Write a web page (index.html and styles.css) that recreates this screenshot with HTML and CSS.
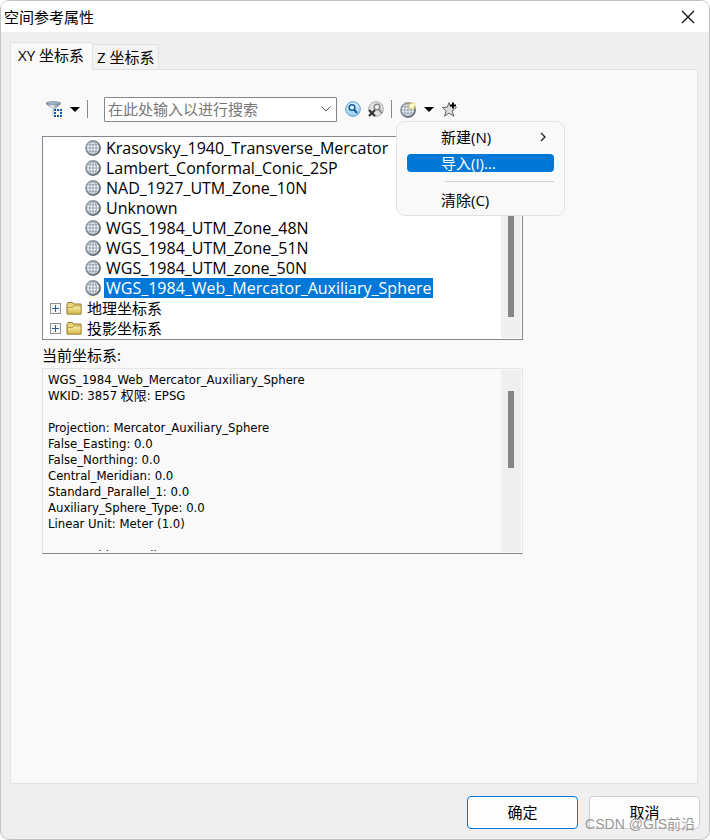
FILE: index.html
```html
<!DOCTYPE html>
<html lang="zh-CN">
<head>
    <meta charset="UTF-8">
    <meta name="viewport" content="width=device-width, initial-scale=1.0">
    <title>空间参考属性</title>
    <link rel="stylesheet" href="styles.css">
</head>
<body>

    <!-- shared icons -->
    <svg class="defs" width="0" height="0" aria-hidden="true">
        <defs>
            <linearGradient id="metal" x1="0" y1="0" x2="1" y2="1">
                <stop offset="0" stop-color="#a3acb5"/>
                <stop offset="1" stop-color="#4f5a66"/>
            </linearGradient>
            <linearGradient id="gold" x1="0" y1="0" x2="0" y2="1">
                <stop offset="0" stop-color="#fbf1ae"/>
                <stop offset="1" stop-color="#d2b548"/>
            </linearGradient>
            <linearGradient id="funnel" x1="0" y1="0" x2="1" y2="0">
                <stop offset="0" stop-color="#6f8397"/>
                <stop offset="0.4" stop-color="#e6ebf0"/>
                <stop offset="1" stop-color="#5a6f85"/>
            </linearGradient>
            <linearGradient id="lens" x1="0" y1="0" x2="0" y2="1">
                <stop offset="0" stop-color="#d9effc"/>
                <stop offset="1" stop-color="#9ccdf0"/>
            </linearGradient>
        </defs>
        <symbol id="globe" viewBox="0 0 16 16">
            <circle cx="8" cy="8" r="7" fill="#f6f8fa" stroke="url(#metal)" stroke-width="1.8"/>
            <path d="M8 1.500v13M1.500 8h13M2.500 4.800h11M2.500 11.200h11M7 1.500C4 4 4 12 7 14.500M9 1.500c3 2.500 3 10.500 0 13" fill="none" stroke="#8492a1" stroke-width="0.8"/>
        </symbol>
        <symbol id="folder" viewBox="0 0 16 13">
            <path d="M1 12V2l1-1.500h4.500l1 1.500H15V12z" fill="#e9d478" stroke="#8f7a2c"/>
            <path d="M1.500 5.500h5l1-1.500H15V12H1.500z" fill="url(#gold)" stroke="#a8913a" stroke-width="0.8"/>
        </symbol>
    </svg>

    <div class="dialog">
        <header class="titlebar">
            <h1>空间参考属性</h1>
            <button type="button" class="close" aria-label="关闭">
                <svg width="14" height="14" viewBox="0 0 14 14"><path d="M1 1l12 12M13 1L1 13" stroke="#111" stroke-width="1.300"/></svg>
            </button>
        </header>

        <div class="tabs" role="tablist">
            <button type="button" class="tab active" role="tab" aria-selected="true">XY 坐标系</button>
            <button type="button" class="tab" role="tab" aria-selected="false">Z 坐标系</button>
        </div>

        <main class="panel">
            <div class="toolbar">
                <button type="button" class="tool filter" aria-label="筛选">
                    <svg width="17" height="17" viewBox="0 0 17 17">
                        <path d="M0 1.500h14.500v1.500L9.500 8v7.500H8L5.500 14V8L0 3z" fill="url(#funnel)"/>
                        <ellipse cx="7.300" cy="2" rx="7" ry="1.500" fill="#9fb3c6" stroke="#71869b" stroke-width="0.600"/>
                        <rect x="8" y="8" width="9" height="9" fill="#f9f9f9"/>
                        <path d="M8 8h2v2H8zM11 8h2v2h-2zM14 8h2v2h-2zM8 11h2v2H8zM14 11h2v2h-2zM8 14h2v2H8zM11 14h2v2h-2zM14 14h2v2h-2z" fill="#0c5aa6"/>
                    </svg>
                    <span class="arrow"></span>
                </button>
                <span class="divider"></span>
                <div class="search">
                    <input type="text" placeholder="在此处输入以进行搜索" aria-label="搜索">
                    <button type="button" aria-label="搜索记录">
                        <svg width="10" height="6" viewBox="0 0 10 6"><path d="M0.500 0.500L5 5l4.500-4.500" fill="none" stroke="#555"/></svg>
                    </button>
                </div>
                <button type="button" class="tool" aria-label="搜索">
                    <svg width="16" height="16" viewBox="0 0 16 16">
                        <circle cx="8" cy="8" r="7.300" fill="url(#lens)" stroke="#5a9fd0"/>
                        <circle cx="7" cy="6.500" r="2.800" fill="#f4fbff" stroke="#0e5c9e" stroke-width="1.500"/>
                        <path d="M9 8.500l3 3.500" stroke="#0e5c9e" stroke-width="2"/>
                    </svg>
                </button>
                <button type="button" class="tool" aria-label="清除搜索">
                    <svg width="16" height="16" viewBox="0 0 16 16">
                        <circle cx="8" cy="8" r="7.300" fill="#e2e2e2" stroke="#aaa"/>
                        <circle cx="9" cy="6" r="2.800" fill="#f5f5f5" stroke="#888" stroke-width="1.500"/>
                        <path d="M11 8.500l3 4" stroke="#888" stroke-width="2"/>
                        <path d="M1 9l6 6M7 9l-6 6" stroke="#333" stroke-width="2"/>
                    </svg>
                </button>
                <span class="divider"></span>
                <div class="globe-menu">
                    <button type="button" class="tool globe" aria-label="添加坐标系" aria-haspopup="menu" aria-expanded="true">
                        <svg width="17" height="17" viewBox="0 0 17 17">
                            <use href="#globe" y="1" width="16" height="16"/>
                            <path d="M12 1v8M8 5h8M9.200 2.200l5.600 5.600M14.800 2.200L9.200 7.800" stroke="#e0c65a" stroke-width="1.200"/>
                            <circle cx="12" cy="5" r="2.400" fill="#fff9c8"/>
                        </svg>
                        <span class="arrow"></span>
                    </button>
                    <div class="menu" role="menu">
                        <button type="button" class="item" role="menuitem">新建(N)
                            <svg width="6" height="10" viewBox="0 0 6 10"><path d="M1 1l4 4-4 4" fill="none" stroke="#222" stroke-width="1.300"/></svg>
                        </button>
                        <button type="button" class="item selected" role="menuitem">导入(I)...</button>
                        <hr>
                        <button type="button" class="item" role="menuitem">清除(C)</button>
                    </div>
                </div>
                <button type="button" class="tool" aria-label="添加到收藏夹">
                    <svg width="16" height="16" viewBox="0 0 16 16">
                        <path d="M7 1.500l1.700 4.700 5.800 0.200-4.500 3.500 2 5.300-5-3-4.500 3 1.500-5.300-3.500-3.500 4.800-0.200z" fill="#dcdcdc" stroke="#666"/>
                        <path d="M11 2v5M8.500 4.500h5" stroke="#fff" stroke-width="4"/>
                        <path d="M11 1.500v6M8 4.500h6" stroke="#000" stroke-width="2"/>
                    </svg>
                </button>
            </div>

            <div class="box tree-box">
                <ul class="tree" role="tree">
                    <li class="leaf" role="treeitem"><svg width="16" height="16"><use href="#globe"/></svg><span>Krasovsky_1940_Transverse_Mercator</span></li>
                    <li class="leaf" role="treeitem"><svg width="16" height="16"><use href="#globe"/></svg><span>Lambert_Conformal_Conic_2SP</span></li>
                    <li class="leaf" role="treeitem"><svg width="16" height="16"><use href="#globe"/></svg><span>NAD_1927_UTM_Zone_10N</span></li>
                    <li class="leaf" role="treeitem"><svg width="16" height="16"><use href="#globe"/></svg><span>Unknown</span></li>
                    <li class="leaf" role="treeitem"><svg width="16" height="16"><use href="#globe"/></svg><span>WGS_1984_UTM_Zone_48N</span></li>
                    <li class="leaf" role="treeitem"><svg width="16" height="16"><use href="#globe"/></svg><span>WGS_1984_UTM_Zone_51N</span></li>
                    <li class="leaf" role="treeitem"><svg width="16" height="16"><use href="#globe"/></svg><span>WGS_1984_UTM_zone_50N</span></li>
                    <li class="leaf current" role="treeitem" aria-selected="true"><svg width="16" height="16"><use href="#globe"/></svg><span>WGS_1984_Web_Mercator_Auxiliary_Sphere</span></li>
                    <li role="treeitem" aria-expanded="false">
                        <button type="button" class="expand" aria-label="展开"></button>
                        <svg width="16" height="13"><use href="#folder"/></svg><span>地理坐标系</span>
                    </li>
                    <li role="treeitem" aria-expanded="false">
                        <button type="button" class="expand" aria-label="展开"></button>
                        <svg width="16" height="13"><use href="#folder"/></svg><span>投影坐标系</span>
                    </li>
                </ul>
                <div class="scrollbar"><div class="thumb"></div></div>
            </div>

            <label class="caption" for="details">当前坐标系:</label>
            <div class="box details-box">
                <textarea id="details" readonly>
WGS_1984_Web_Mercator_Auxiliary_Sphere
WKID: 3857 权限: EPSG

Projection: Mercator_Auxiliary_Sphere
False_Easting: 0.0
False_Northing: 0.0
Central_Meridian: 0.0
Standard_Parallel_1: 0.0
Auxiliary_Sphere_Type: 0.0
Linear Unit: Meter (1.0)

Geographic Coordinate System:</textarea>
                <div class="scrollbar"><div class="thumb"></div></div>
            </div>
        </main>

        <footer class="actions">
            <button type="button" class="action primary">确定</button>
            <button type="button" class="action">取消</button>
            <span class="watermark">CSDN @GIS前沿</span>
        </footer>
    </div>

</body>
</html>
```

FILE: styles.css
```css
* {
    box-sizing: border-box;
}

body {
    margin: 0;
    background: #fff;
    color: #000;
    font-family: "Open Sans", "Noto Sans CJK SC", sans-serif;
    font-size: 15px;
    line-height: 20px;
}

button, input, textarea {
    font: inherit;
    color: inherit;
    margin: 0;
    padding: 0;
    border: none;
    background: none;
}

svg {
    display: block;
    flex: none;
}

.defs {
    position: absolute;
}

.dialog {
    display: flex;
    flex-direction: column;
    min-height: 100vh;
    border: 1px solid #c3c3c3;
    border-radius: 9px;
    background: #efefef;
    overflow: hidden;
}

/* title bar */
.titlebar {
    display: flex;
    align-items: center;
    justify-content: space-between;
    height: 31px;
    padding: 0 14px 0 3px;
    background: #fff;
}

.titlebar h1 {
    margin: 0;
    font-size: 15px;
    font-weight: normal;
}

/* tabs */
.tabs {
    display: flex;
    align-items: flex-end;
    padding: 10px 9px 0;
}

.tab {
    height: 25px;
    padding: 0 4px;
    border: 1px solid #e2e2e2;
    border-left: none;
    border-bottom: none;
    background: #f3f3f3;
    white-space: nowrap;
}

.tab.active {
    z-index: 1;
    height: 28px;
    margin-bottom: -1px;
    padding: 0 8px 3px 7px;
    border-left: 1px solid #e2e2e2;
    background: #f9f9f9;
}

.panel {
    flex: 1;
    margin: 0 11px 0 9px;
    padding: 26px 174px 26px 31px;
    border: 1px solid #e2e2e2;
    background: #f9f9f9;
}

/* toolbar */
.toolbar {
    display: flex;
    align-items: center;
    gap: 7px;
    height: 27px;
    padding: 0 0 1px 4px;
}

.tool {
    display: flex;
    align-items: center;
    gap: 7px;
}

.arrow {
    border: 5px solid transparent;
    border-top-color: #000;
    border-bottom: none;
}

.divider {
    width: 1px;
    height: 18px;
    background: #888;
}

.search {
    display: flex;
    align-items: center;
    flex: 0 1 233px;
    height: 25px;
    margin: 0 1px 0 9px;
    padding: 0 5px 0 3px;
    border: 1px solid #868686;
    border-radius: 1px;
    background: #fff;
}

.search input {
    flex: 1;
    min-width: 0;
    height: 21px;
    outline: none;
}

.search input::placeholder {
    color: #777;
    opacity: 1;
}

/* drop-down menu */
.globe-menu {
    position: relative;
    margin: 0 1px;
}

.menu {
    position: absolute;
    top: 20px;
    left: -4px;
    z-index: 2;
    width: 169px;
    padding: 6px 10px;
    border: 1px solid #e2e2e2;
    border-radius: 9px;
    background: #f9f9f9;
}

.item {
    display: flex;
    align-items: center;
    justify-content: space-between;
    width: 100%;
    height: 18px;
    padding: 0 8px 0 34px;
    border-radius: 4px;
    text-align: left;
    white-space: nowrap;
}

.item + .item {
    margin-top: 8px;
}

.item.selected {
    background: #0078d7;
    color: #fff;
}

.menu hr {
    height: 1px;
    margin: 9px 0 9px 38px;
    border: none;
    background: #d2d2d2;
}

/* coordinate system tree */
.box {
    display: flex;
    padding: 1px;
    border: 1px solid #828790;
}

.tree-box {
    margin-top: 13px;
    background: #fff;
}

.tree {
    flex: 1;
    min-width: 0;
    margin: 0;
    padding: 0 0 0 6px;
    list-style: none;
}

.tree li {
    display: flex;
    align-items: center;
    height: 20px;
    white-space: nowrap;
}

.tree .leaf {
    padding-left: 35px;
    font-size: 16px;
}

.tree span {
    margin-left: 3px;
    padding: 0 2px;
}

.tree .current span {
    background: #0078d7;
    color: #fff;
}

.expand {
    width: 11px;
    height: 11px;
    margin-right: 5px;
    border: 1px solid #919191;
    background:
        linear-gradient(#3559a0, #3559a0) center / 7px 1px no-repeat,
        linear-gradient(#3559a0, #3559a0) center / 1px 7px no-repeat,
        #f6f6f6;
}

.scrollbar {
    display: flex;
    justify-content: center;
    width: 20px;
    background: #efefef;
}

.thumb {
    width: 6px;
    height: 120px;
    background: #858585;
}

.tree-box .thumb {
    margin-top: 59px;
}

/* details */
.caption {
    display: block;
    margin: 5px 0 3px;
}

.details-box {
    height: 186px;
    border-color: #e5e5e5;
    border-bottom-color: #868686;
}

.details-box textarea {
    flex: 1;
    min-width: 0;
    margin-bottom: 1px;
    padding: 2px 4px 0;
    font-family: "DejaVu Sans Condensed", "Noto Sans CJK SC", sans-serif;
    font-size: 13px;
    line-height: 16px;
    resize: none;
    overflow: hidden;
    outline: none;
}

.details-box .thumb {
    height: 77px;
    margin-top: 21px;
}

/* bottom buttons */
.actions {
    position: relative;
    display: flex;
    justify-content: flex-end;
    gap: 11px;
    padding: 12px 9px 10px;
}

.action {
    width: 111px;
    height: 33px;
    padding-bottom: 2px;
    border: 1px solid #d0d0d0;
    border-radius: 4px;
    background: #fdfdfd;
}

.action.primary {
    border-color: #0078d7;
}

.watermark {
    position: absolute;
    right: 14px;
    bottom: 5px;
    color: #999;
    font-family: "Liberation Sans", "Noto Sans CJK SC", sans-serif;
    font-size: 14px;
}
```
